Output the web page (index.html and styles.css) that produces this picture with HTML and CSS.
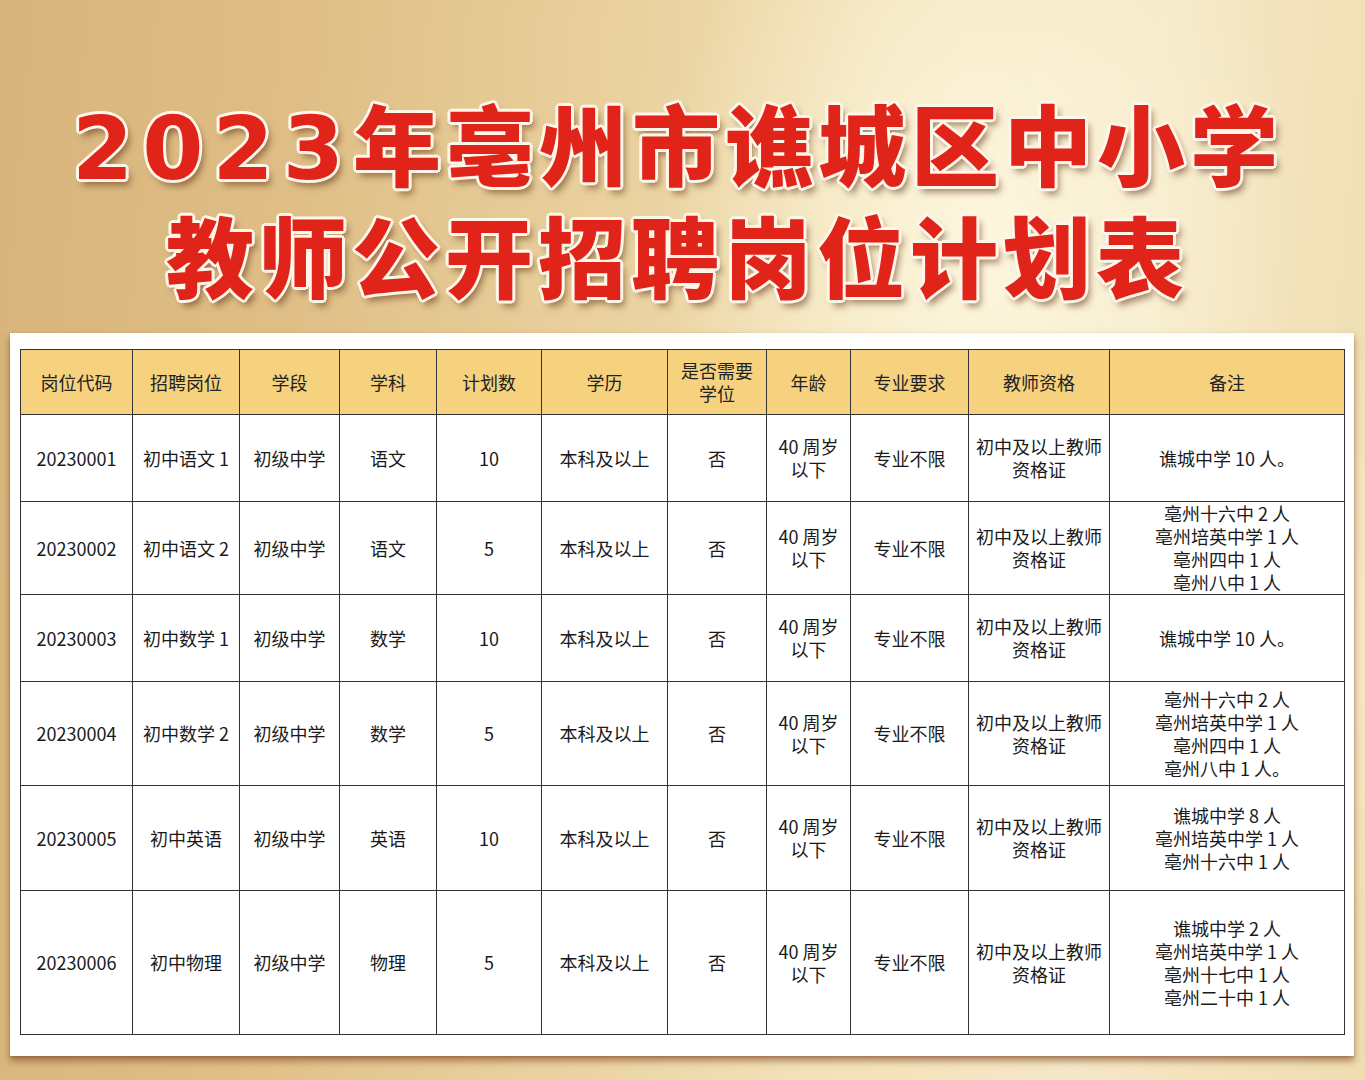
FILE: index.html
```html
<!DOCTYPE html>
<html lang="zh-CN">
<head>
<meta charset="utf-8">
<title>2023年亳州市谯城区中小学教师公开招聘岗位计划表</title>
<link rel="stylesheet" href="styles.css">
</head>
<body>
<div class="page">
  <header class="title">
    <h1 class="line line1"><span class="digits">2023</span>年亳州市谯城区中小学</h1>
    <h1 class="line line2">教师公开招聘岗位计划表</h1>
  </header>
  <section class="card">
    <table class="plan">
      <colgroup>
        <col class="c1"><col class="c2"><col class="c3"><col class="c4"><col class="c5"><col class="c6"><col class="c7"><col class="c8"><col class="c9"><col class="c10"><col class="c11">
      </colgroup>
      <thead>
        <tr class="h">
          <th>岗位代码</th><th>招聘岗位</th><th>学段</th><th>学科</th><th>计划数</th><th>学历</th><th>是否需要<br>学位</th><th>年龄</th><th>专业要求</th><th>教师资格</th><th>备注</th>
        </tr>
      </thead>
      <tbody>
        <tr class="r1">
          <td>20230001</td><td>初中语文 1</td><td>初级中学</td><td>语文</td><td>10</td><td>本科及以上</td><td>否</td><td>40 周岁<br>以下</td><td>专业不限</td><td>初中及以上教师<br>资格证</td><td>谯城中学 10 人。</td>
        </tr>
        <tr class="r2">
          <td>20230002</td><td>初中语文 2</td><td>初级中学</td><td>语文</td><td>5</td><td>本科及以上</td><td>否</td><td>40 周岁<br>以下</td><td>专业不限</td><td>初中及以上教师<br>资格证</td><td>亳州十六中 2 人<br>亳州培英中学 1 人<br>亳州四中 1 人<br>亳州八中 1 人</td>
        </tr>
        <tr class="r3">
          <td>20230003</td><td>初中数学 1</td><td>初级中学</td><td>数学</td><td>10</td><td>本科及以上</td><td>否</td><td>40 周岁<br>以下</td><td>专业不限</td><td>初中及以上教师<br>资格证</td><td>谯城中学 10 人。</td>
        </tr>
        <tr class="r4">
          <td>20230004</td><td>初中数学 2</td><td>初级中学</td><td>数学</td><td>5</td><td>本科及以上</td><td>否</td><td>40 周岁<br>以下</td><td>专业不限</td><td>初中及以上教师<br>资格证</td><td>亳州十六中 2 人<br>亳州培英中学 1 人<br>亳州四中 1 人<br>亳州八中 1 人。</td>
        </tr>
        <tr class="r5">
          <td>20230005</td><td>初中英语</td><td>初级中学</td><td>英语</td><td>10</td><td>本科及以上</td><td>否</td><td>40 周岁<br>以下</td><td>专业不限</td><td>初中及以上教师<br>资格证</td><td>谯城中学 8 人<br>亳州培英中学 1 人<br>亳州十六中 1 人</td>
        </tr>
        <tr class="r6">
          <td>20230006</td><td>初中物理</td><td>初级中学</td><td>物理</td><td>5</td><td>本科及以上</td><td>否</td><td>40 周岁<br>以下</td><td>专业不限</td><td>初中及以上教师<br>资格证</td><td>谯城中学 2 人<br>亳州培英中学 1 人<br>亳州十七中 1 人<br>亳州二十中 1 人</td>
        </tr>
      </tbody>
    </table>
  </section>
</div>
</body>
</html>
```
FILE: styles.css
```css
* { box-sizing: border-box; }
html, body { margin: 0; padding: 0; }
body {
  width: 1365px;
  height: 1080px;
  overflow: hidden;
  font-family: "Noto Sans CJK SC", "Noto Sans", sans-serif;
  background:
    radial-gradient(ellipse 420px 620px at 72% 22%, rgba(255, 250, 228, 0.85), rgba(255, 250, 228, 0) 75%),
    radial-gradient(ellipse 500px 400px at 95% 60%, rgba(250, 238, 205, 0.7), rgba(250, 238, 205, 0) 80%),
    linear-gradient(95deg, #d7b47b 0%, #dfbf87 22%, #e9d09d 42%, #f2e2b8 62%, #f5e8c6 80%, #efddb0 100%);
}
.page {
  display: flex;
  flex-direction: column;
  height: 1080px;
}
.title {
  height: 333px;
  padding: 89px 10px 0 0;
  display: flex;
  flex-direction: column;
  align-items: center;
}
.line {
  margin: 0;
  font-family: "Noto Sans CJK SC", sans-serif;
  font-weight: 900;
  font-size: 88px;
  line-height: 104px;
  letter-spacing: 5px;
  color: #e1241a;
  white-space: nowrap;
  text-shadow:
    3px 0 0 #fff6ea, -3px 0 0 #fff6ea, 0 3px 0 #fff6ea, 0 -3px 0 #fff6ea,
    2px 2px 0 #fff6ea, -2px 2px 0 #fff6ea, 2px -2px 0 #fff6ea, -2px -2px 0 #fff6ea,
    4px 6px 7px rgba(90, 40, 10, 0.55);
}
.digits {
  font-family: "DejaVu Sans", sans-serif;
  font-weight: 700;
  letter-spacing: 9px;
}

.card {
  margin-left: 10px;
  width: 1344px;
  height: 723px;
  background: #fff;
  padding: 16px 10px 0 10px;
  box-shadow: 0 5px 7px rgba(120, 55, 25, 0.55), 0 1px 2px rgba(120, 70, 30, 0.3);
}
.plan {
  width: 1324px;
  table-layout: fixed;
  border-collapse: collapse;
  color: #1a1a1a;
  font-size: 18px;
  line-height: 23px;
}
.plan th, .plan td {
  border: 1.5px solid #333;
  text-align: center;
  vertical-align: middle;
  padding: 0 4px;
  font-weight: 400;
  white-space: nowrap;
}
.plan th { background: #f6d27f; color: #222; }
.c1 { width: 112px; } .c2 { width: 107px; } .c3 { width: 100px; } .c4 { width: 97px; }
.c5 { width: 105px; } .c6 { width: 126px; } .c7 { width: 99px; } .c8 { width: 84px; }
.c9 { width: 118px; } .c10 { width: 141px; } .c11 { width: 235px; }
.h { height: 65px; }
.r1 { height: 87px; }
.r2 { height: 92px; }
.r3 { height: 87px; }
.r4 { height: 104px; }
.r5 { height: 105px; }
.r6 { height: 144px; }
```
